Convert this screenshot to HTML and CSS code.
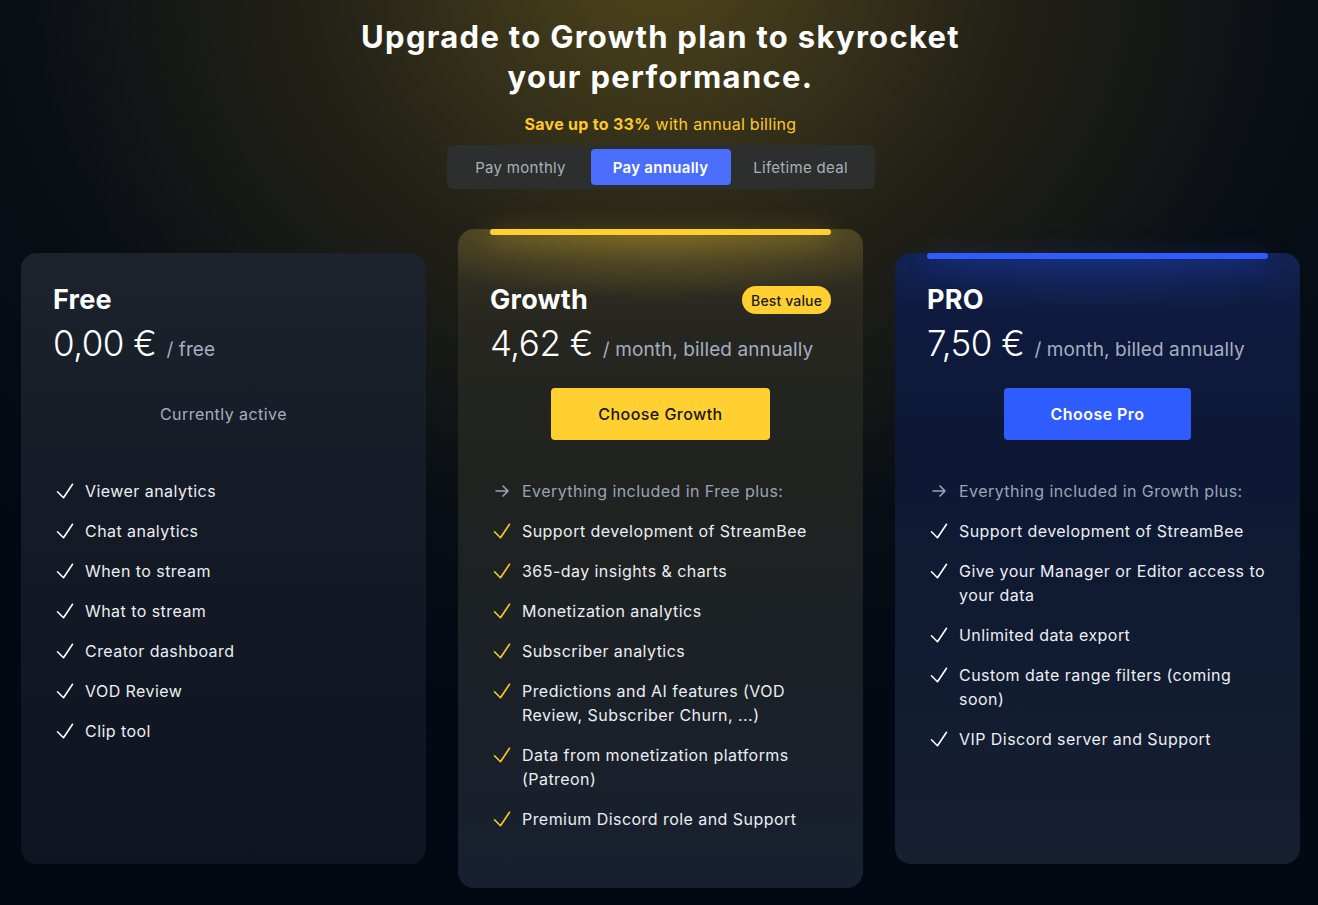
FILE: index.html
```html
<!DOCTYPE html>
<html lang="en">
<head>
<meta charset="utf-8">
<title>Upgrade to Growth</title>
<link rel="stylesheet" href="styles.css">
</head>
<body>
<div class="page">
  <header class="hero">
    <h1 class="hero-title">Upgrade to Growth plan to skyrocket<br>your performance.</h1>
    <p class="hero-save"><strong>Save up to 33%</strong> with annual billing</p>
    <div class="toggle">
      <button class="toggle-btn">Pay monthly</button>
      <button class="toggle-btn toggle-btn--active">Pay annually</button>
      <button class="toggle-btn">Lifetime deal</button>
    </div>
  </header>

  <section class="plans">
    <article class="card card--free">
      <div class="card-head">
        <h2 class="card-name">Free</h2>
      </div>
      <div class="price"><span class="price-amount">0,00 €</span><span class="price-unit">/ free</span></div>
      <div class="card-action"><span class="current">Currently active</span></div>
      <ul class="features">
        <li class="feature"><svg class="ico" viewBox="0 0 24 24"><path d="M4.5 12.75l6 6 9-13.5"/></svg><span>Viewer analytics</span></li>
        <li class="feature"><svg class="ico" viewBox="0 0 24 24"><path d="M4.5 12.75l6 6 9-13.5"/></svg><span>Chat analytics</span></li>
        <li class="feature"><svg class="ico" viewBox="0 0 24 24"><path d="M4.5 12.75l6 6 9-13.5"/></svg><span>When to stream</span></li>
        <li class="feature"><svg class="ico" viewBox="0 0 24 24"><path d="M4.5 12.75l6 6 9-13.5"/></svg><span>What to stream</span></li>
        <li class="feature"><svg class="ico" viewBox="0 0 24 24"><path d="M4.5 12.75l6 6 9-13.5"/></svg><span>Creator dashboard</span></li>
        <li class="feature"><svg class="ico" viewBox="0 0 24 24"><path d="M4.5 12.75l6 6 9-13.5"/></svg><span>VOD Review</span></li>
        <li class="feature"><svg class="ico" viewBox="0 0 24 24"><path d="M4.5 12.75l6 6 9-13.5"/></svg><span>Clip tool</span></li>
      </ul>
    </article>

    <article class="card card--growth">
      <span class="card-bar card-bar--yellow"></span>
      <div class="card-head">
        <h2 class="card-name">Growth</h2>
        <span class="badge">Best value</span>
      </div>
      <div class="price"><span class="price-amount">4,62 €</span><span class="price-unit">/ month, billed annually</span></div>
      <div class="card-action"><button class="btn btn--yellow">Choose Growth</button></div>
      <ul class="features features--yellow">
        <li class="feature feature--muted"><svg class="ico ico--arrow" viewBox="0 0 24 24"><path d="M6 12h12M13 7l5 5-5 5"/></svg><span>Everything included in Free plus:</span></li>
        <li class="feature"><svg class="ico" viewBox="0 0 24 24"><path d="M4.5 12.75l6 6 9-13.5"/></svg><span>Support development of StreamBee</span></li>
        <li class="feature"><svg class="ico" viewBox="0 0 24 24"><path d="M4.5 12.75l6 6 9-13.5"/></svg><span>365-day insights &amp; charts</span></li>
        <li class="feature"><svg class="ico" viewBox="0 0 24 24"><path d="M4.5 12.75l6 6 9-13.5"/></svg><span>Monetization analytics</span></li>
        <li class="feature"><svg class="ico" viewBox="0 0 24 24"><path d="M4.5 12.75l6 6 9-13.5"/></svg><span>Subscriber analytics</span></li>
        <li class="feature"><svg class="ico" viewBox="0 0 24 24"><path d="M4.5 12.75l6 6 9-13.5"/></svg><span>Predictions and AI features (VOD Review, Subscriber Churn, ...)</span></li>
        <li class="feature"><svg class="ico" viewBox="0 0 24 24"><path d="M4.5 12.75l6 6 9-13.5"/></svg><span>Data from monetization platforms (Patreon)</span></li>
        <li class="feature"><svg class="ico" viewBox="0 0 24 24"><path d="M4.5 12.75l6 6 9-13.5"/></svg><span>Premium Discord role and Support</span></li>
      </ul>
    </article>

    <article class="card card--pro">
      <span class="card-bar card-bar--blue"></span>
      <div class="card-head">
        <h2 class="card-name">PRO</h2>
      </div>
      <div class="price"><span class="price-amount">7,50 €</span><span class="price-unit">/ month, billed annually</span></div>
      <div class="card-action"><button class="btn btn--blue">Choose Pro</button></div>
      <ul class="features">
        <li class="feature feature--muted"><svg class="ico ico--arrow" viewBox="0 0 24 24"><path d="M6 12h12M13 7l5 5-5 5"/></svg><span>Everything included in Growth plus:</span></li>
        <li class="feature"><svg class="ico" viewBox="0 0 24 24"><path d="M4.5 12.75l6 6 9-13.5"/></svg><span>Support development of StreamBee</span></li>
        <li class="feature"><svg class="ico" viewBox="0 0 24 24"><path d="M4.5 12.75l6 6 9-13.5"/></svg><span>Give your Manager or Editor access to your data</span></li>
        <li class="feature"><svg class="ico" viewBox="0 0 24 24"><path d="M4.5 12.75l6 6 9-13.5"/></svg><span>Unlimited data export</span></li>
        <li class="feature"><svg class="ico" viewBox="0 0 24 24"><path d="M4.5 12.75l6 6 9-13.5"/></svg><span>Custom date range filters (coming soon)</span></li>
        <li class="feature"><svg class="ico" viewBox="0 0 24 24"><path d="M4.5 12.75l6 6 9-13.5"/></svg><span>VIP Discord server and Support</span></li>
      </ul>
    </article>
  </section>
</div>
</body>
</html>
```

FILE: styles.css
```css
* { box-sizing: border-box; }

html, body {
  margin: 0;
  height: 100%;
}

body {
  font-family: "Inter", "Noto Sans", sans-serif;
  letter-spacing: 0.028em;
  color: #ffffff;
  background-color: #020913;
  background-image:
    radial-gradient(ellipse 640px 580px at 50% -40px, rgba(96, 82, 28, 0.75), rgba(62, 54, 24, 0.38) 55%, rgba(2, 9, 19, 0) 100%),
    radial-gradient(ellipse 950px 720px at 50% 0, rgba(40, 38, 28, 0.6), rgba(2, 9, 19, 0) 100%);
  background-repeat: no-repeat;
  overflow: hidden;
}

.page {
  padding: 17px 18px 0 21px;
}

.hero {
  display: flex;
  flex-direction: column;
  align-items: center;
  text-align: center;
}

.hero-title {
  margin: 0;
  font-size: 31px;
  line-height: 40px;
  font-weight: 700;
  letter-spacing: 1.3px;
}

.hero-save {
  margin: 15px 0 0;
  font-size: 16px;
  line-height: 24px;
  color: #ffc928;
  letter-spacing: 0.018em;
}

.hero-save strong { font-weight: 700; }

.toggle {
  margin-top: 9px;
  display: flex;
  padding: 4px;
  background: #2c2f2e;
  border-radius: 6px;
}

.toggle-btn {
  width: 140px;
  height: 36px;
  border: 0;
  border-radius: 4px;
  background: transparent;
  font-family: inherit;
  letter-spacing: 0.02em;
  font-size: 15px;
  color: #a9afbb;
  cursor: pointer;
}

.toggle-btn--active {
  background: #4a6dfb;
  color: #ffffff;
  font-weight: 600;
}

.plans {
  margin-top: 64px;
  display: grid;
  grid-template-columns: repeat(3, 1fr);
  column-gap: 32px;
}

.card {
  position: relative;
  border-radius: 16px;
  padding: 32px 32px 33px 32px;
}

.card--free {
  background: linear-gradient(180deg, #1c232c 0%, #141b26 40%, #0e1520 100%);
}

.card--growth {
  margin: -24px 0;
  padding: 56px 32px 57px 32px;
  background:
    radial-gradient(ellipse 300px 70px at 50% 0, rgba(255, 208, 48, 0.28), rgba(255, 208, 48, 0) 100%),
    linear-gradient(180deg, #3a3522 0%, #272720 14%, #20231f 35%, #1c2125 60%, #182030 100%);
}

.card--pro {
  background:
    radial-gradient(ellipse 300px 60px at 50% 0, rgba(47, 92, 255, 0.22), rgba(47, 92, 255, 0) 100%),
    linear-gradient(180deg, #0f1d45 0%, #0c1835 30%, #111b31 65%, #172031 100%);
}

.card-bar {
  position: absolute;
  top: 0;
  left: 32px;
  right: 32px;
  height: 6px;
  border-radius: 3px;
}

.card-bar--yellow {
  background: #ffd030;
  box-shadow: 0 4px 24px rgba(255, 208, 48, 0.45);
}

.card-bar--blue {
  background: #2f5cff;
  box-shadow: 0 4px 24px rgba(47, 92, 255, 0.45);
}

.card-head {
  display: flex;
  align-items: center;
  justify-content: space-between;
  height: 30px;
}

.card-name {
  margin: 0;
  font-size: 27px;
  line-height: 30px;
  font-weight: 700;
  letter-spacing: 0.01em;
}

.badge {
  height: 28px;
  padding: 0 9px;
  display: flex;
  align-items: center;
  border-radius: 14px;
  background: #ffd030;
  color: #1b1b1b;
  font-size: 14px;
  font-weight: 500;
  letter-spacing: 0.01em;
}

.price {
  display: flex;
  align-items: baseline;
  gap: 10px;
  margin-top: 4px;
  height: 48px;
  line-height: 48px;
  letter-spacing: 0;
}

.price-amount {
  font-size: 35px;
  font-weight: 300;
  color: #ffffff;
  letter-spacing: -0.5px;
}

.price-unit {
  font-size: 19px;
  color: #a6aec0;
  letter-spacing: 0.005em;
}

.card-action {
  margin-top: 21px;
  height: 52px;
  display: flex;
  align-items: center;
  justify-content: center;
}

.current {
  font-size: 16px;
  color: #a6aec0;
}

.btn {
  height: 52px;
  padding: 0 47px;
  border: 0;
  border-radius: 4px;
  font-family: inherit;
  font-size: 16px;
  letter-spacing: 0.028em;
  cursor: pointer;
}

.btn--yellow {
  background: #ffd030;
  color: #17171a;
  font-weight: 500;
}

.btn--blue {
  background: #2f5cff;
  color: #ffffff;
  font-weight: 600;
}

.features {
  list-style: none;
  margin: 39px 0 0;
  padding: 0;
  display: flex;
  flex-direction: column;
  gap: 16px;
}

.feature {
  display: flex;
  align-items: flex-start;
  gap: 8px;
  font-size: 16px;
  line-height: 24px;
  color: #eceef2;
}

.feature--muted { color: #9ba4b6; }

.ico {
  flex: 0 0 24px;
  width: 24px;
  height: 24px;
  fill: none;
  stroke: #ffffff;
  stroke-width: 1.6;
  stroke-linecap: round;
  stroke-linejoin: round;
}

.features--yellow .ico { stroke: #ffc928; }

.ico.ico--arrow,
.features--yellow .ico.ico--arrow { stroke: #9ba4b6; }
```
